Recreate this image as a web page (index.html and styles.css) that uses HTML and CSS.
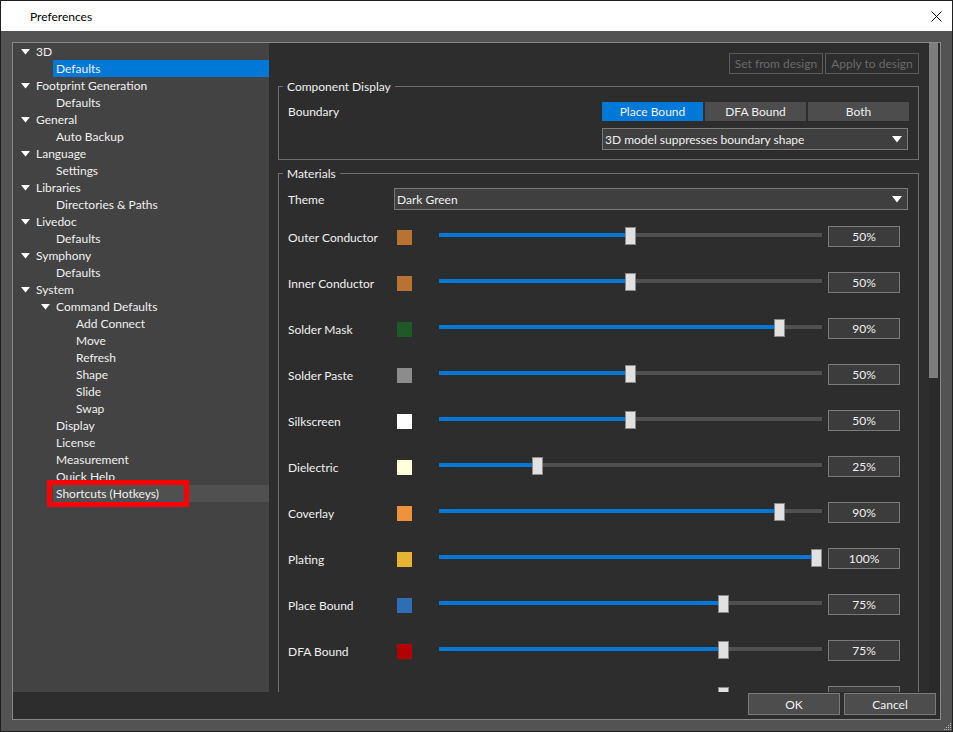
FILE: index.html
```html
<!DOCTYPE html>
<html>
<head>
<meta charset="utf-8">
<title>Preferences</title>
<link rel="stylesheet" href="styles.css">
</head>
<body>
<div class="window">
  <div class="titlebar">
    <span class="title">Preferences</span>
    <svg class="close" width="11" height="11" viewBox="0 0 11 11"><path d="M0.5 0.5L10.5 10.5M10.5 0.5L0.5 10.5" stroke="#000" stroke-width="1" fill="none"/></svg>
  </div>
  <div class="client">
    <div class="frame">
      <div class="main">
        <div class="tree">
          <div class="row l1"><span class="arrow"><svg width="9" height="6" viewBox="0 0 9 6"><path d="M0 0H9L4.5 5.5Z" fill="#fff"/></svg></span><span class="label">3D</span></div>
          <div class="row l2 sel"><span class="arrow"></span><span class="label">Defaults</span></div>
          <div class="row l1"><span class="arrow"><svg width="9" height="6" viewBox="0 0 9 6"><path d="M0 0H9L4.5 5.5Z" fill="#fff"/></svg></span><span class="label">Footprint Generation</span></div>
          <div class="row l2"><span class="arrow"></span><span class="label">Defaults</span></div>
          <div class="row l1"><span class="arrow"><svg width="9" height="6" viewBox="0 0 9 6"><path d="M0 0H9L4.5 5.5Z" fill="#fff"/></svg></span><span class="label">General</span></div>
          <div class="row l2"><span class="arrow"></span><span class="label">Auto Backup</span></div>
          <div class="row l1"><span class="arrow"><svg width="9" height="6" viewBox="0 0 9 6"><path d="M0 0H9L4.5 5.5Z" fill="#fff"/></svg></span><span class="label">Language</span></div>
          <div class="row l2"><span class="arrow"></span><span class="label">Settings</span></div>
          <div class="row l1"><span class="arrow"><svg width="9" height="6" viewBox="0 0 9 6"><path d="M0 0H9L4.5 5.5Z" fill="#fff"/></svg></span><span class="label">Libraries</span></div>
          <div class="row l2"><span class="arrow"></span><span class="label">Directories &amp; Paths</span></div>
          <div class="row l1"><span class="arrow"><svg width="9" height="6" viewBox="0 0 9 6"><path d="M0 0H9L4.5 5.5Z" fill="#fff"/></svg></span><span class="label">Livedoc</span></div>
          <div class="row l2"><span class="arrow"></span><span class="label">Defaults</span></div>
          <div class="row l1"><span class="arrow"><svg width="9" height="6" viewBox="0 0 9 6"><path d="M0 0H9L4.5 5.5Z" fill="#fff"/></svg></span><span class="label">Symphony</span></div>
          <div class="row l2"><span class="arrow"></span><span class="label">Defaults</span></div>
          <div class="row l1"><span class="arrow"><svg width="9" height="6" viewBox="0 0 9 6"><path d="M0 0H9L4.5 5.5Z" fill="#fff"/></svg></span><span class="label">System</span></div>
          <div class="row l2"><span class="arrow"><svg width="9" height="6" viewBox="0 0 9 6"><path d="M0 0H9L4.5 5.5Z" fill="#fff"/></svg></span><span class="label">Command Defaults</span></div>
          <div class="row l3"><span class="arrow"></span><span class="label">Add Connect</span></div>
          <div class="row l3"><span class="arrow"></span><span class="label">Move</span></div>
          <div class="row l3"><span class="arrow"></span><span class="label">Refresh</span></div>
          <div class="row l3"><span class="arrow"></span><span class="label">Shape</span></div>
          <div class="row l3"><span class="arrow"></span><span class="label">Slide</span></div>
          <div class="row l3"><span class="arrow"></span><span class="label">Swap</span></div>
          <div class="row l2"><span class="arrow"></span><span class="label">Display</span></div>
          <div class="row l2"><span class="arrow"></span><span class="label">License</span></div>
          <div class="row l2"><span class="arrow"></span><span class="label">Measurement</span></div>
          <div class="row l2"><span class="arrow"></span><span class="label">Quick Help</span></div>
          <div class="row l2 hover"><span class="arrow"></span><span class="label">Shortcuts (Hotkeys)</span></div>
        </div>

        <div class="content">
          <div class="actions">
            <button class="btn-dis">Set from design</button>
            <button class="btn-dis">Apply to design</button>
          </div>

          <div class="group g-comp">
            <div class="group-title">Component Display</div>
            <div class="boundary">
              <span class="lbl">Boundary</span>
              <div class="ctrls">
                <div class="seg">
                  <span class="seg-item on">Place Bound</span>
                  <span class="seg-item">DFA Bound</span>
                  <span class="seg-item">Both</span>
                </div>
                <div class="combo"><span>3D model suppresses boundary shape</span><svg width="10" height="7" viewBox="0 0 10 7"><path d="M0 0H10L5 6.5Z" fill="#fff"/></svg></div>
              </div>
            </div>
          </div>

          <div class="group g-mat">
            <div class="group-title">Materials</div>
            <div class="theme">
              <span class="lbl">Theme</span>
              <div class="combo"><span>Dark Green</span><svg width="10" height="7" viewBox="0 0 10 7"><path d="M0 0H10L5 6.5Z" fill="#fff"/></svg></div>
            </div>
            <div class="mats">
              <div class="mat"><span class="mname">Outer Conductor</span><span class="swatch" style="background:#b87333"></span><div class="slider"><div class="track"><div class="fill" style="width:calc((100% - 11px) * 0.5 + 5px)"></div></div><div class="thumb" style="left:calc((100% - 11px) * 0.5)"></div></div><span class="val">50%</span></div>
              <div class="mat"><span class="mname">Inner Conductor</span><span class="swatch" style="background:#b87333"></span><div class="slider"><div class="track"><div class="fill" style="width:calc((100% - 11px) * 0.5 + 5px)"></div></div><div class="thumb" style="left:calc((100% - 11px) * 0.5)"></div></div><span class="val">50%</span></div>
              <div class="mat"><span class="mname">Solder Mask</span><span class="swatch" style="background:#1e5a28"></span><div class="slider"><div class="track"><div class="fill" style="width:calc((100% - 11px) * 0.9 + 5px)"></div></div><div class="thumb" style="left:calc((100% - 11px) * 0.9)"></div></div><span class="val">90%</span></div>
              <div class="mat"><span class="mname">Solder Paste</span><span class="swatch" style="background:#8c8c8c"></span><div class="slider"><div class="track"><div class="fill" style="width:calc((100% - 11px) * 0.5 + 5px)"></div></div><div class="thumb" style="left:calc((100% - 11px) * 0.5)"></div></div><span class="val">50%</span></div>
              <div class="mat"><span class="mname">Silkscreen</span><span class="swatch" style="background:#ffffff"></span><div class="slider"><div class="track"><div class="fill" style="width:calc((100% - 11px) * 0.5 + 5px)"></div></div><div class="thumb" style="left:calc((100% - 11px) * 0.5)"></div></div><span class="val">50%</span></div>
              <div class="mat"><span class="mname">Dielectric</span><span class="swatch" style="background:#ffffdc"></span><div class="slider"><div class="track"><div class="fill" style="width:calc((100% - 11px) * 0.25 + 5px)"></div></div><div class="thumb" style="left:calc((100% - 11px) * 0.25)"></div></div><span class="val">25%</span></div>
              <div class="mat"><span class="mname">Coverlay</span><span class="swatch" style="background:#f0913c"></span><div class="slider"><div class="track"><div class="fill" style="width:calc((100% - 11px) * 0.9 + 5px)"></div></div><div class="thumb" style="left:calc((100% - 11px) * 0.9)"></div></div><span class="val">90%</span></div>
              <div class="mat"><span class="mname">Plating</span><span class="swatch" style="background:#e6b432"></span><div class="slider"><div class="track"><div class="fill" style="width:calc((100% - 11px) * 1 + 5px)"></div></div><div class="thumb" style="left:calc((100% - 11px) * 1)"></div></div><span class="val">100%</span></div>
              <div class="mat"><span class="mname">Place Bound</span><span class="swatch" style="background:#2d6eb4"></span><div class="slider"><div class="track"><div class="fill" style="width:calc((100% - 11px) * 0.75 + 5px)"></div></div><div class="thumb" style="left:calc((100% - 11px) * 0.75)"></div></div><span class="val">75%</span></div>
              <div class="mat"><span class="mname">DFA Bound</span><span class="swatch" style="background:#b40000"></span><div class="slider"><div class="track"><div class="fill" style="width:calc((100% - 11px) * 0.75 + 5px)"></div></div><div class="thumb" style="left:calc((100% - 11px) * 0.75)"></div></div><span class="val">75%</span></div>
              <div class="mat"><span class="mname">3D Model</span><span class="swatch" style="background:#2d2d2d"></span><div class="slider"><div class="track"><div class="fill" style="width:calc((100% - 11px) * 0.75 + 5px)"></div></div><div class="thumb" style="left:calc((100% - 11px) * 0.75)"></div></div><span class="val">75%</span></div>
            </div>
          </div>
        </div>

        <div class="scrollbar"><div class="sthumb"></div></div>
      </div>
      <div class="footer">
        <button class="btn">OK</button>
        <button class="btn">Cancel</button>
      </div>
    </div>
  </div>
  <div class="annot"></div>
  <svg class="grip" width="9" height="9" viewBox="0 0 9 9">
    <rect x="7" y="1" width="1" height="1" fill="#bbb"/>
    <rect x="5" y="3" width="1" height="1" fill="#bbb"/><rect x="7" y="3" width="1" height="1" fill="#bbb"/>
    <rect x="3" y="5" width="1" height="1" fill="#bbb"/><rect x="5" y="5" width="1" height="1" fill="#bbb"/><rect x="7" y="5" width="1" height="1" fill="#bbb"/>
    <rect x="1" y="7" width="1" height="1" fill="#bbb"/><rect x="3" y="7" width="1" height="1" fill="#bbb"/><rect x="5" y="7" width="1" height="1" fill="#bbb"/><rect x="7" y="7" width="1" height="1" fill="#bbb"/>
  </svg>
</div>
</body>
</html>
```

FILE: styles.css
```css
* { box-sizing: border-box; }
html, body { margin: 0; padding: 0; }
body {
  width: 953px;
  height: 732px;
  overflow: hidden;
  background: #1f1f1f;
  font-family: Lato, "Noto Sans", "DejaVu Sans", sans-serif;
  font-size: 12px;
  color: #f0f0f0;
}
.window {
  position: relative;
  width: 953px;
  height: 732px;
  border: 1px solid #202020;
  background: #535353;
  display: flex;
  flex-direction: column;
}
.titlebar {
  height: 30px;
  flex: none;
  background: #ffffff;
  color: #000;
  display: flex;
  align-items: center;
  padding: 0 10px 0 29px;
}
.title { flex: 1; }
.close { display: block; }

.client { flex: 1; padding: 11px; display: flex; }
.frame {
  flex: 1;
  border: 1px solid #888888;
  display: flex;
  flex-direction: column;
}
.main { height: 649px; display: flex; }

/* tree */
.tree { width: 256px; flex: none; background: #434343; }
.row { height: 17px; display: flex; align-items: center; }
.row.l1 { padding-left: 8px; }
.row.l2 { padding-left: 28px; }
.row.l3 { padding-left: 48px; }
.arrow { width: 12px; flex: none; display: flex; align-items: center; }
.arrow svg { display: block; }
.label {
  flex: 1;
  height: 17px;
  line-height: 17px;
  padding-left: 3px;
  white-space: nowrap;
}
.row.sel .label { background: #0078d7; }
.row.hover .label { background: #505050; }

/* content */
.content {
  width: 660px;
  flex: none;
  background: #2d2d2d;
  overflow: hidden;
  padding: 10px 10px 0 9px;
}
.actions { display: flex; justify-content: flex-end; gap: 2px; }
.btn-dis {
  width: 94px;
  height: 21px;
  padding: 0;
  border: 1px solid #5a5a5a;
  background: #2d2d2d;
  color: #6a6a6a;
  font: inherit;
}
.group { border: 1px solid #6e6e6e; padding: 0 9px; }
.group-title {
  margin: -9px 0 0 -5px;
  padding: 0 4px;
  width: max-content;
  line-height: 17px;
  background: #2d2d2d;
}
.g-comp { margin-top: 12px; padding-bottom: 9px; }
.boundary { margin-top: 7px; display: grid; grid-template-columns: 314px 1fr; }
.lbl { line-height: 19px; }
.ctrls { display: flex; flex-direction: column; gap: 7px; }
.seg { display: flex; gap: 2px; height: 19px; }
.seg-item { flex: 1; background: #4d4d4d; text-align: center; line-height: 19px; }
.seg-item.on { background: #0078d7; }
.combo {
  height: 22px;
  margin-right: 1px;
  background: #3f3f3f;
  border: 1px solid #7a7a7a;
  display: flex;
  align-items: center;
  justify-content: space-between;
  padding: 0 5px 0 2px;
}
.combo svg { display: block; }

.g-mat { margin-top: 13px; height: 700px; }
.theme {
  margin-top: 6px;
  display: grid;
  grid-template-columns: 106px 1fr;
  align-items: center;
}
.mats { margin-top: 4px; }
.mat { height: 46px; display: flex; align-items: center; }
.mname { width: 109px; flex: none; white-space: nowrap; }
.swatch { width: 15px; height: 15px; flex: none; }
.slider {
  position: relative;
  width: 383px;
  height: 18px;
  margin: 0 0 2px 27px;
  flex: none;
}
.track {
  position: absolute;
  left: 0;
  right: 0;
  top: 6px;
  height: 4px;
  background: #505050;
}
.fill { height: 100%; background: #0078d7; }
.thumb {
  position: absolute;
  top: 0;
  width: 11px;
  height: 18px;
  background: #e1e1e1;
  border: 1px solid #8a8a8a;
}
.val {
  width: 72px;
  height: 21px;
  margin: 0 0 2px 6px;
  flex: none;
  border: 1px solid #7a7a7a;
  background: #3c3c3c;
  text-align: center;
  line-height: 19px;
}

/* scrollbar */
.scrollbar { width: 11px; flex: none; background: #2a2a2a; }
.sthumb { width: 9px; height: 335px; background: #7e7e7e; }

/* footer */
.footer {
  height: 27px;
  flex: none;
  background: #2d2d2d;
  display: flex;
  justify-content: flex-end;
  gap: 4px;
  padding: 1px 4px 0 0;
}
.btn {
  width: 92px;
  height: 22px;
  padding: 0;
  border: 1px solid #7a7a7a;
  background: #4d4d4d;
  color: #f0f0f0;
  font: inherit;
}

/* annotation overlay */
.annot {
  position: absolute;
  left: 46px;
  top: 479px;
  width: 142px;
  height: 27px;
  border: 5px solid #ff0000;
}
.grip { position: absolute; right: 0; bottom: 0; }
```
